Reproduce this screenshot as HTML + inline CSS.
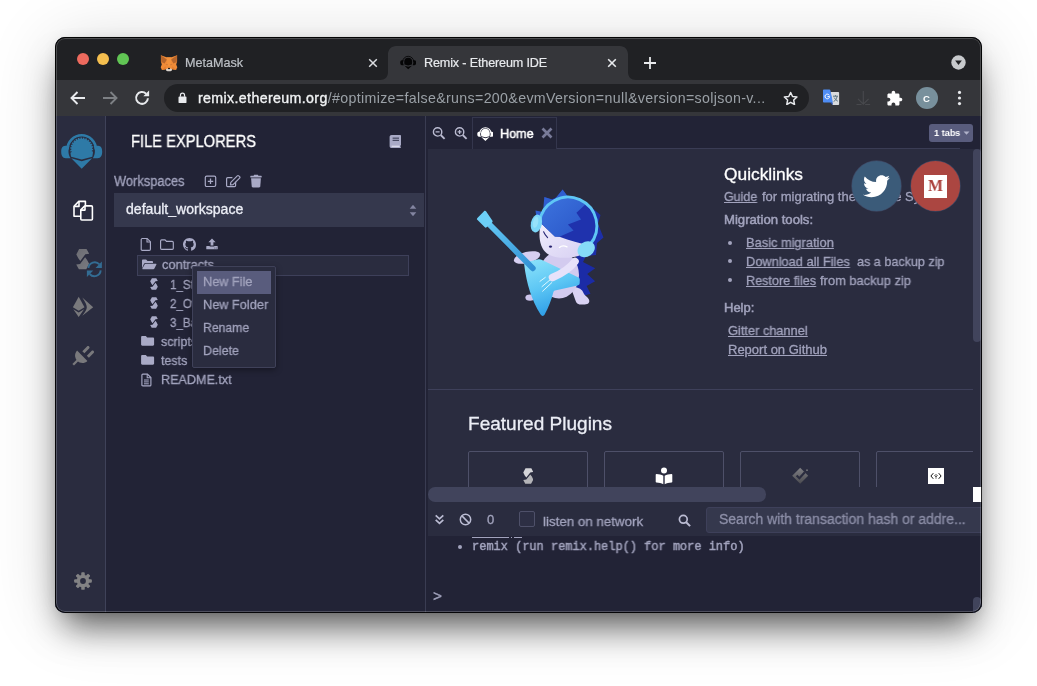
<!DOCTYPE html>
<html lang="en">
<head>
<meta charset="utf-8">
<title>Remix - Ethereum IDE</title>
<style>
*{box-sizing:border-box;margin:0;padding:0}
html,body{width:1037px;height:686px;overflow:hidden;background:#fff}
body{font-family:"Liberation Sans",sans-serif;color:#a2a3bd;position:relative}
.abs{position:absolute}
#win{position:absolute;left:55px;top:37px;width:927px;height:576px;border-radius:10px;background:#222336;overflow:hidden;z-index:2}
#shadow{position:absolute;left:56px;top:38px;width:925px;height:574px;border-radius:10px;
 box-shadow:0 22px 34px -8px rgba(0,0,0,.6),0 6px 70px rgba(0,0,0,.16),0 1px 14px rgba(0,0,0,.08),0 0 2px rgba(0,0,0,.4);z-index:1}
#ring{position:absolute;left:0;top:0;width:927px;height:576px;border-radius:10px;box-shadow:inset 0 0 0 1px rgba(0,0,0,.85);z-index:50;pointer-events:none}
#ring2{position:absolute;left:1px;top:1px;width:925px;height:574px;border-radius:9px;box-shadow:inset 0 0 0 1px rgba(255,255,255,.2);z-index:49;pointer-events:none}
/* chrome */
#tabstrip{position:absolute;left:0;top:0;width:927px;height:43px;background:#202124}
#toolbar{position:absolute;left:0;top:43px;width:927px;height:36px;background:#35363a}
.tl{position:absolute;top:16px;width:12px;height:12px;border-radius:50%}
.ctext{font-family:"Liberation Sans",sans-serif;font-size:12.5px;white-space:nowrap}
/* remix */
#app{position:absolute;left:0;top:79px;width:927px;height:497px;background:#222336}
#iconpanel{position:absolute;left:0;top:0;width:51px;height:497px;background:#2a2c3f;border-right:1px solid #3f4259}
#side{position:absolute;left:52px;top:0;width:318px;height:497px;background:#222336}
#main{position:absolute;left:371px;top:0;width:556px;height:497px;background:#222336}
#split{position:absolute;left:370px;top:0;width:1px;height:497px;background:#3a3c52}
.t{position:absolute;white-space:nowrap;line-height:1;will-change:transform}
#app .t{-webkit-text-stroke:.3px currentColor}
#app .t.ns{-webkit-text-stroke:0}
</style>
</head>
<body>
<div id="shadow"></div>
<div id="win">
  <div id="ring"></div><div id="ring2"></div>
  <div id="tabstrip">
    <div class="tl" style="left:22px;background:#ed6a5e"></div>
    <div class="tl" style="left:42px;background:#f5bf4f"></div>
    <div class="tl" style="left:62px;background:#61c554"></div>

    <!-- inactive tab -->
    <svg class="abs" style="left:105px;top:17px" width="18" height="18" viewBox="160 54 18 18">
      <path d="M160.900 55.300L166.500 57.300L171.500 57.300L177.100 55.300L177.100 61.500L176.200 64.400L177.300 67.200L176.100 70.100L172.200 69.300L170.500 70.600L167.500 70.600L165.800 69.300L161.900 70.100L160.700 67.200L161.800 64.400L160.900 61.500Z" fill="#f08b37"/>
      <path d="M160.900 55.300L166.900 59.600L164.600 63.600L161.300 62Z" fill="#b5652c"/>
      <path d="M177.100 55.300L171.100 59.600L173.400 63.600L176.700 62Z" fill="#b5652c"/>
      <path d="M166.500 57.300L171.500 57.300L170.300 66L167.700 66Z" fill="#f39840" opacity=".6"/>
      <path d="M165.500 64L167.700 64.300L167.300 65.600Z" fill="#c9773a"/><path d="M172.500 64L170.300 64.300L170.700 65.600Z" fill="#c9773a"/>
      <path d="M161.900 70.100L165.600 66.300L165.800 69.300Z" fill="#e27d2e"/><path d="M176.100 70.100L172.400 66.300L172.200 69.300Z" fill="#e27d2e"/>
      <ellipse cx="169" cy="69.700" rx="3" ry="1.500" fill="#d9d3cd"/>
      <ellipse cx="169" cy="68.500" rx="1" ry=".700" fill="#111"/>
    </svg>
    <div class="t ctext" style="left:130px;top:20px;color:#bdc1c6;font-size:12.6px;-webkit-text-stroke:.2px #bdc1c6" id="tMeta">MetaMask</div>
    <svg class="abs" style="left:313px;top:21px" width="10" height="10" viewBox="0 0 10 10"><path d="M1.2 1.2L8.8 8.8M8.8 1.2L1.2 8.8" stroke="#dadce0" stroke-width="1.5" fill="none"/></svg>
    <!-- active tab -->
    <svg class="abs" style="left:325px;top:9px" width="256" height="34" viewBox="0 0 256 34">
      <path d="M0 34 C5 34 8 31 8 26 L8 8 C8 3.6 11.6 0 16 0 L240 0 C244.4 0 248 3.6 248 8 L248 26 C248 31 251 34 256 34 Z" fill="#35363a"/>
    </svg>
    <svg class="abs" style="left:344.800px;top:18px" width="16.400" height="14.500" viewBox="60.700 132 42 37.100">
      <g fill="#050506"><path d="M67.500 149.500A14.200 14.200 0 0 1 95.900 149.500" fill="none" stroke="#050506" stroke-width="2.200"/>
      <path d="M69.900 145.700L65.300 145.700C62.300 145.900 61.200 148.300 61.200 151.500C61.200 155.400 62.400 158.200 65.800 158.200L70.600 158.200C68.300 155 67.600 149.500 69.900 145.700Z"/>
      <path d="M93.500 145.700L98.100 145.700C101.100 145.900 102.200 148.300 102.200 151.500C102.200 155.400 101 158.200 97.600 158.200L92.800 158.200C95.100 155 95.800 149.500 93.500 145.700Z"/>
      <path d="M71.600 149A10.100 10.100 0 0 1 91.800 149C91.800 152 91.600 154.300 91.100 156.200L81.700 158.700L72.300 156.200C71.800 154.300 71.600 152 71.600 149Z"/>
      <path d="M72.300 159.300L81.700 162.200L91.100 159.300L81.700 168.700Z"/></g>
    </svg>
    <div class="t ctext" style="left:369px;top:20px;color:#e8eaed;font-size:12.6px;letter-spacing:-.15px;-webkit-text-stroke:.2px #e8eaed" id="tRemix">Remix - Ethereum IDE</div>
    <svg class="abs" style="left:552px;top:21px" width="10" height="10" viewBox="0 0 10 10"><path d="M1.200 1.200L8.800 8.800M8.800 1.200L1.200 8.800" stroke="#e8eaed" stroke-width="1.600" fill="none"/></svg>
    <svg class="abs" style="left:588px;top:19px" width="14" height="14" viewBox="0 0 14 14"><path d="M7 1V13M1 7H13" stroke="#e8eaed" stroke-width="1.800" fill="none"/></svg>
    <svg class="abs" style="left:896px;top:18px" width="15" height="15" viewBox="0 0 15 15"><circle cx="7.500" cy="7.500" r="7.200" fill="#c8cacd"/><path d="M4.100 5.600h6.800L7.500 10z" fill="#202124"/></svg>
  </div>
  <div id="toolbar">
    <svg class="abs" style="left:14px;top:10px" width="18" height="16" viewBox="0 0 18 16"><path d="M16 8H3M8.500 2L2.500 8l6 6" stroke="#e8eaed" stroke-width="1.900" fill="none"/></svg>
    <svg class="abs" style="left:46px;top:10px" width="18" height="16" viewBox="0 0 18 16"><path d="M2 8h13M9.500 2l6 6-6 6" stroke="#7d8084" stroke-width="1.900" fill="none"/></svg>
    <svg class="abs" style="left:78px;top:9px" width="18" height="18" viewBox="0 0 18 18"><path d="M14.900 9.200A5.900 5.900 0 1 1 13.100 4.700" stroke="#e8eaed" stroke-width="2" fill="none"/><path d="M10.300 7.300h5.800V1.500z" fill="#e8eaed"/></svg>
    <div class="abs" style="left:109px;top:4px;width:645px;height:28px;border-radius:14px;background:#202124"></div>
    <svg class="abs" style="left:122.600px;top:11.800px" width="9" height="11.500" viewBox="0 0 10 13"><rect x="0.500" y="5.200" width="9" height="7.300" rx="1" fill="#e8eaed"/><path d="M2.700 5.500V3.700a2.300 2.300 0 0 1 4.600 0V5.500" stroke="#e8eaed" stroke-width="1.400" fill="none"/></svg>
    <div class="t" style="left:143px;top:10.500px;font-size:14.200px;color:#e8eaed;letter-spacing:0" id="tUrl"><span id="tDom" style="letter-spacing:.37px;color:#f1f3f4;-webkit-text-stroke:.35px #f1f3f4">remix.ethereum.org</span><span style="color:#9aa0a6;letter-spacing:.35px" id="tPath">/#optimize=false&amp;runs=200&amp;evmVersion=null&amp;version=soljson-v...</span></div>
    <svg class="abs" style="left:728px;top:10.500px" width="15.300" height="14.400" viewBox="0 0 17 16"><path d="M8.500 1.600l2.100 4.500 4.900.6-3.600 3.400.9 4.900-4.300-2.400-4.300 2.400.9-4.900L1.500 6.700l4.900-.6z" stroke="#e8eaed" stroke-width="1.650" fill="none" stroke-linejoin="round"/></svg>
    <svg class="abs" style="left:767px;top:9px" width="18" height="18" viewBox="822 90 18 18"><path d="M830.500 93H838.300C838.800 93 839.100 93.300 839.100 93.800V105.200C839.100 105.700 838.800 106 838.300 106H832.500Z" fill="#d9dbdd"/><path d="M833 97.200h5M835.500 96.200v1M833.600 102.600c1.700-.9 3-2.600 3.500-5.200M834.200 98.600c.8 1.500 2 2.800 3.600 3.600" stroke="#4f6a78" stroke-width=".9" fill="none"/><path d="M830.300 103.500L832.600 106L832.600 103.500Z" fill="#2a56c6"/><path d="M823.800 90.400H829.400C829.900 90.400 830.200 90.600 830.300 91.100L832.900 103.500H823.800C823.300 103.500 823 103.200 823 102.700V91.200C823 90.700 823.300 90.400 823.800 90.400Z" fill="#4f8df5"/><path d="M829.300 96.300A2.300 2.300 0 1 0 829.600 97.600H827.500" stroke="#fff" stroke-width="1" fill="none"/></svg>
    <svg class="abs" style="left:800px;top:10px" width="16" height="16" viewBox="855 90 16 16"><path d="M863.300 91V104M858 98.800L863.300 104.200L868.600 98.800M856.500 104.500H861.500M865.100 104.500H870.100" stroke="#48494d" stroke-width="1.150" fill="none"/></svg>
    <svg class="abs" style="left:831px;top:10px" width="17" height="17" viewBox="0 0 24 24"><path d="M20.500 11H19V7c0-1.100-.9-2-2-2h-4V3.500C13 2.120 11.880 1 10.500 1S8 2.120 8 3.500V5H4c-1.100 0-1.990.9-1.990 2v3.800H3.500c1.490 0 2.700 1.210 2.700 2.700s-1.210 2.700-2.700 2.700H2V20c0 1.100.9 2 2 2h3.800v-1.500c0-1.490 1.210-2.700 2.700-2.700 1.490 0 2.700 1.210 2.700 2.700V22H17c1.100 0 2-.9 2-2v-4h1.500c1.380 0 2.500-1.120 2.500-2.500S21.880 11 20.500 11z" fill="#fff"/></svg>
    <div class="abs" style="left:861px;top:7px;width:22px;height:22px;border-radius:50%;background:#78909c"></div>
    <div class="t" style="left:868px;top:13.500px;font-size:9.500px;color:#fff;font-weight:bold">C</div>
    <svg class="abs" style="left:902px;top:9px" width="5" height="18" viewBox="0 0 5 18"><circle cx="2.500" cy="3.400" r="1.600" fill="#e8eaed"/><circle cx="2.500" cy="9" r="1.600" fill="#e8eaed"/><circle cx="2.500" cy="14.600" r="1.600" fill="#e8eaed"/></svg>
  </div>
  <div id="app">
    <div id="iconpanel">
      <svg class="abs" style="left:0;top:0" width="51" height="496" viewBox="55 116 51 496">
        <!-- remix logo -->
        <g fill="#2e7aa7">
          <path d="M67.500 149.500A14.200 14.200 0 0 1 95.900 149.500" fill="none" stroke="#2e7aa7" stroke-width="2.600"/>
          <path d="M69.900 145.700L65.300 145.700C62.300 145.900 61.200 148.300 61.200 151.500C61.200 155.400 62.400 158.200 65.800 158.200L70.600 158.200C68.300 155 67.600 149.500 69.900 145.700Z"/>
          <path d="M93.500 145.700L98.100 145.700C101.100 145.900 102.200 148.300 102.200 151.500C102.200 155.400 101 158.200 97.600 158.200L92.800 158.200C95.100 155 95.800 149.500 93.500 145.700Z"/>
          <path d="M70.300 149A11.400 11.400 0 0 1 93.100 149C93.100 152 92.800 154.800 92.300 156.700L81.700 159.500L71.100 156.700C70.600 154.800 70.300 152 70.300 149Z"/>
          <path d="M71.300 158.300L81.700 161.200L92.100 158.300L81.700 168.700Z"/>
        </g>
        <path d="M70.900 152.400A11.300 11.300 0 1 1 92.500 152.400" fill="none" stroke="#2a2c3f" stroke-width="1.900" stroke-dasharray="1.050 1.600" />
        <!-- files -->
        <g fill="none" stroke="#fff" stroke-width="1.600" stroke-linejoin="round">
          <path d="M80.200 216.200H74V206.200L78.800 201.400H85.400V205.200"/>
          <path d="M74.200 206.400H79V201.600"/>
          <path d="M84.800 205.900H91.400Q92.400 205.900 92.400 206.900V219Q92.400 220 91.400 220H81.800Q80.800 220 80.800 219V209.900Z"/><path d="M80.900 210.100H85V206"/>
        </g>
        <!-- solidity -->
        <defs><linearGradient id="sg" x1="0" y1="0" x2="1" y2="1"><stop offset="0" stop-color="#7d7d80"/><stop offset="1" stop-color="#929294"/></linearGradient></defs>
        <path d="M76.300 254.400L79.100 249L86.500 249L89.200 253.700L85.300 254.300L80.300 261L78.300 258.200Z" fill="url(#sg)" opacity=".78"/>
        <path d="M89.100 263.800L86.300 269.200L78.900 269.200L76.200 264.500L80.100 263.900L85.100 257.200L87.100 260Z" fill="url(#sg)" opacity=".78"/>
        <!-- sync -->
        <g fill="none" stroke="#336c93" stroke-width="1.900">
          <path d="M88.400 268A6.300 6.300 0 0 1 99.400 264.400"/>
          <path d="M100.700 270.400A6.300 6.300 0 0 1 89.700 274"/>
        </g>
        <path d="M101.900 261.500V267.900H95.500z" fill="#336c93"/>
        <path d="M86.900 276.900V270.500H93.300z" fill="#336c93"/>
        <!-- deploy (ethereum) -->
        <g fill="#79797c">
          <path d="M78.700 296.700L72.900 307.200L78.700 310.700L84.500 307.200Z"/>
          <path d="M73.300 309.200L78.700 317L84.100 309.200L78.700 312.600Z"/>
          <path d="M82.300 297.400L93.200 307.200L82.300 315.800C85.400 311.600 86.800 309.600 86.800 307.200C86.800 304.800 85.400 302 82.300 297.400Z"/>
        </g>
        <!-- plug -->
        <g fill="#79797c" stroke="none">
          <path d="M72.400 363.900L77.600 358.700L79.200 360.300L74 365.500Z"/>
          <path d="M77.100 350.600L87.400 360.900C84.400 363.700 80 363.500 77.200 360.700C74.400 357.900 74.400 353.500 77.100 350.600Z"/>
          <path d="M82.300 351.200L87 346.500C87.600 345.900 88.500 345.900 89.100 346.500C89.700 347.100 89.700 348 89.100 348.600L84.400 353.300Z"/>
          <path d="M86.800 355.700L91.500 351C92.100 350.400 93 350.400 93.600 351C94.200 351.600 94.200 352.500 93.600 353.100L88.900 357.800Z"/>
        </g>
        <!-- settings gear -->
        <g transform="translate(83 581)">
          <g fill="#828284">
            <rect x="-1.750" y="-8.850" width="3.500" height="17.700" rx=".9"/>
            <rect x="-1.750" y="-8.850" width="3.500" height="17.700" rx=".9" transform="rotate(45)"/>
            <rect x="-1.750" y="-8.850" width="3.500" height="17.700" rx=".9" transform="rotate(90)"/>
            <rect x="-1.750" y="-8.850" width="3.500" height="17.700" rx=".9" transform="rotate(135)"/>
            <circle r="6.300"/>
          </g>
          <circle r="2.900" fill="#2a2c3f"/>
        </g>
      </svg>
    </div>
    <div id="side"><div class="abs" style="left:-107px;top:-116px;width:0;height:0">
      <div class="t" style='left:131px;top:133.00px;font-size:16.5px;color:#ffffff;transform:scaleX(0.8909);transform-origin:0 0'>FILE EXPLORERS</div>
      <!-- book icon -->
      <svg class="abs" style="left:389px;top:134px" width="13" height="15" viewBox="0 0 13 15">
        <path d="M2.600 1H11.200C11.700 1 12 1.300 12 1.800V10.800C12 11.200 11.800 11.400 11.500 11.500V13C11.800 13.100 12 13.300 12 13.600C12 13.900 11.800 14.100 11.400 14.100H2.800C1.500 14.100 0.600 13.200 0.600 11.900V3C0.600 1.800 1.400 1 2.600 1Z" fill="#a9aac6"/>
        <rect x="3.600" y="3.600" width="6.400" height="1.100" fill="#3b3d55"/><rect x="3.600" y="5.800" width="6.400" height="1.100" fill="#3b3d55"/>
        <rect x="2.600" y="11.700" width="8" height="1.100" fill="#e4e5f0"/>
      </svg>
      <div class="t" style='left:114px;top:174.00px;font-size:14px;color:#a2a3bd;transform:scaleX(0.9182);transform-origin:0 0'>Workspaces</div>
      <!-- plus-square -->
      <svg class="abs" style="left:204px;top:175px" width="13" height="13" viewBox="0 0 13 13"><rect x="1.300" y="1.100" width="10.400" height="10.400" rx="1.400" fill="none" stroke="#a9aac6" stroke-width="1.200"/><path d="M6.500 3.600V9M3.800 6.300H9.200" stroke="#a9aac6" stroke-width="1.300" fill="none"/></svg>
      <!-- edit -->
      <svg class="abs" style="left:225px;top:174px" width="16" height="14" viewBox="0 0 16 14"><path d="M10.600 7.800V11.600C10.600 12.300 10.200 12.700 9.500 12.700H2.700C2 12.700 1.600 12.300 1.600 11.600V4.800C1.600 4.100 2 3.700 2.700 3.700H7.400" fill="none" stroke="#a9aac6" stroke-width="1.200"/><path d="M5.800 8.300L12.300 1.800C12.700 1.400 13.300 1.400 13.700 1.800L14.600 2.700C15 3.100 15 3.700 14.600 4.100L8.100 10.600L5.400 11Z" fill="none" stroke="#a9aac6" stroke-width="1.200" stroke-linejoin="round"/></svg>
      <!-- trash -->
      <svg class="abs" style="left:250px;top:174px" width="12" height="14" viewBox="0 0 12 14"><path d="M0.300 2.300C0.300 2 0.500 1.800 0.800 1.800H3.600L4 1.100C4.100 0.900 4.300 0.800 4.500 0.800H7.500C7.700 0.800 7.900 0.900 8 1.100L8.400 1.800H11.200C11.500 1.800 11.700 2 11.700 2.300V3.100C11.700 3.300 11.600 3.400 11.400 3.400H0.600C0.400 3.400 0.300 3.300 0.300 3.100Z" fill="#a9aac6"/><path d="M1.100 4.300H10.900L10.300 12.300C10.250 12.900 9.800 13.400 9.100 13.400H2.900C2.200 13.400 1.750 12.900 1.700 12.300Z" fill="#a9aac6"/></svg>
      <!-- select -->
      <div class="abs" style="left:114px;top:193px;width:310px;height:34px;background:#35384d"></div>
      <div class="t" style='left:126.2px;top:202.00px;font-size:14px;color:#eceef6;transform:scaleX(1.0047);transform-origin:0 0'>default_workspace</div>
      <svg class="abs" style="left:409px;top:204px" width="8" height="13" viewBox="0 0 8 13"><path d="M0.700 4.700L4 0.700L7.300 4.700Z" fill="#8385a1"/><path d="M0.700 8.300L4 12.300L7.300 8.300Z" fill="#8385a1"/></svg>
      <!-- file action icons -->
      <svg class="abs" style="left:140px;top:237px" width="12" height="15" viewBox="0 0 12 15"><path d="M2.300 1.500H7.200L10.400 4.700V12.300C10.400 13 10 13.400 9.300 13.400H2.300C1.600 13.400 1.200 13 1.200 12.300V2.600C1.200 1.900 1.600 1.500 2.300 1.500Z" fill="none" stroke="#a9aac6" stroke-width="1.150"/><path d="M7 1.700V5H10.200" fill="none" stroke="#a9aac6" stroke-width="1.100"/></svg>
      <svg class="abs" style="left:159px;top:238px" width="16" height="13" viewBox="0 0 16 13"><path d="M2.700 1.800H6L7.500 3.300H13.200C13.900 3.300 14.300 3.700 14.300 4.400V10.200C14.300 10.900 13.900 11.300 13.200 11.300H2.700C2 11.300 1.600 10.900 1.600 10.200V2.900C1.600 2.200 2 1.800 2.700 1.800Z" fill="none" stroke="#a9aac6" stroke-width="1.150"/></svg>
      <svg class="abs" style="left:183px;top:237.600px" width="13" height="13" viewBox="0 0 16 16"><path d="M8 0C3.580 0 0 3.580 0 8c0 3.540 2.290 6.530 5.470 7.590.4.070.55-.17.550-.38 0-.19-.01-.82-.01-1.490-2.010.37-2.530-.49-2.690-.94-.09-.23-.48-.94-.82-1.130-.28-.15-.68-.52-.01-.53.630-.01 1.080.58 1.230.82.720 1.210 1.870.87 2.330.66.070-.52.280-.87.510-1.070-1.780-.2-3.640-.89-3.640-3.950 0-.87.310-1.590.82-2.150-.08-.2-.36-1.020.08-2.120 0 0 .67-.21 2.200.82.640-.18 1.320-.27 2-.27s1.360.09 2 .27c1.530-1.040 2.200-.82 2.200-.82.440 1.100.16 1.920.08 2.120.51.560.82 1.270.82 2.150 0 3.070-1.870 3.750-3.650 3.950.29.250.54.730.54 1.480 0 1.070-.01 1.930-.01 2.200 0 .21.150.46.550.38A8.013 8.013 0 0016 8c0-4.420-3.580-8-8-8z" fill="#a9aac6"/></svg>
      <svg class="abs" style="left:205.500px;top:238.400px" width="12" height="12" viewBox="0 0 13 13"><path d="M6.500 0.600L10.400 4.700H8V8.200H5V4.700H2.600Z" fill="#a9aac6"/><path d="M0.800 8.800H4V9.300H9V8.800H12.200C12.500 8.800 12.700 9 12.700 9.300V11.800C12.700 12.100 12.500 12.300 12.200 12.300H0.800C0.500 12.300 0.300 12.100 0.300 11.800V9.300C0.300 9 0.500 8.800 0.800 8.800Z" fill="#a9aac6"/><circle cx="9.600" cy="10.900" r=".5" fill="#222336"/><circle cx="11.100" cy="10.900" r=".5" fill="#222336"/></svg>
      <!-- tree -->
      <div class="abs" style="left:137px;top:255px;width:272px;height:21px;background:#2a2c3f;border:1px solid #3e405a"></div>
      <svg class="abs" style="left:141px;top:259px" width="16" height="11" viewBox="0 0 16 11"><path d="M1 9.200V1.700C1 1 1.400 0.600 2.100 0.600H5.100L6.500 2H10.900C11.600 2 12 2.400 12 3.100V3.900H4.500C3.800 3.900 3.300 4.200 3 4.800Z" fill="#a9aac6"/><path d="M4.600 4.800H15C15.400 4.800 15.600 5.100 15.400 5.500L13.400 9.600C13.200 10 12.800 10.200 12.400 10.200H1.700C1.300 10.200 1.200 10 1.400 9.600L3.600 5.400C3.800 5 4.200 4.800 4.600 4.800Z" fill="#a9aac6"/></svg>
      <div class="t" style='left:162.2px;top:258.00px;font-size:13px;color:#a2a3bd;transform:scaleX(0.9858);transform-origin:0 0'>contracts</div>
      <svg class="abs" style="left:150.300px;top:278.400px" width="8" height="12" viewBox="0 0 8 12"><path d="M0.200 3.300L1.900 0.200L6.300 0.200L7.800 3L5.500 3.300L2.500 7.200L1.300 5.600Z" fill="#a9aac6"/><path d="M7.800 8.700L6.100 11.800L1.700 11.800L0.200 9L2.500 8.700L5.500 4.800L6.700 6.400Z" fill="#a9aac6"/></svg>
      <div class="t" style='left:169.8px;top:278.00px;font-size:13px;color:#a2a3bd;transform:scaleX(0.8900);transform-origin:0 0'>1_Storage.sol</div>
      <svg class="abs" style="left:150.300px;top:297.300px" width="8" height="12" viewBox="0 0 8 12"><path d="M0.200 3.300L1.900 0.200L6.300 0.200L7.800 3L5.500 3.300L2.500 7.200L1.300 5.600Z" fill="#a9aac6"/><path d="M7.800 8.700L6.100 11.800L1.700 11.800L0.200 9L2.500 8.700L5.500 4.800L6.700 6.400Z" fill="#a9aac6"/></svg>
      <div class="t" style='left:169.8px;top:297.00px;font-size:13px;color:#a2a3bd;transform:scaleX(0.8900);transform-origin:0 0'>2_Owner.sol</div>
      <svg class="abs" style="left:150.300px;top:316.200px" width="8" height="12" viewBox="0 0 8 12"><path d="M0.200 3.300L1.900 0.200L6.300 0.200L7.800 3L5.500 3.300L2.500 7.200L1.300 5.600Z" fill="#a9aac6"/><path d="M7.800 8.700L6.100 11.800L1.700 11.800L0.200 9L2.500 8.700L5.500 4.800L6.700 6.400Z" fill="#a9aac6"/></svg>
      <div class="t" style='left:169.8px;top:316.00px;font-size:13px;color:#a2a3bd;transform:scaleX(0.8900);transform-origin:0 0'>3_Ballot.sol</div>
      <svg class="abs" style="left:141px;top:336.400px" width="14" height="10" viewBox="0 0 14 10"><path d="M1.300 0H4.800L6.200 1.400H11.900C12.600 1.400 13.100 1.900 13.100 2.600V8.500C13.100 9.200 12.600 9.700 11.900 9.700H1.300C0.600 9.700 0.100 9.200 0.100 8.500V1.200C0.100 0.500 0.600 0 1.300 0Z" fill="#a9aac6"/></svg>
      <div class="t" style='left:161.4px;top:335.00px;font-size:13px;color:#a2a3bd;transform:scaleX(0.9600);transform-origin:0 0'>scripts</div>
      <svg class="abs" style="left:141px;top:355.300px" width="14" height="10" viewBox="0 0 14 10"><path d="M1.300 0H4.800L6.200 1.400H11.900C12.600 1.400 13.100 1.900 13.100 2.600V8.500C13.100 9.200 12.600 9.700 11.900 9.700H1.300C0.600 9.700 0.100 9.200 0.100 8.500V1.200C0.100 0.500 0.600 0 1.300 0Z" fill="#a9aac6"/></svg>
      <div class="t" style='left:161.4px;top:354.00px;font-size:13px;color:#a2a3bd;transform:scaleX(0.9600);transform-origin:0 0'>tests</div>
      <svg class="abs" style="left:140.500px;top:372.500px" width="11" height="14" viewBox="0 0 11 14"><path d="M1.900 1.100H6.400L9.900 4.600V11.900C9.900 12.500 9.500 12.900 8.900 12.900H1.900C1.300 12.900 0.900 12.500 0.900 11.900V2.100C0.900 1.500 1.300 1.100 1.900 1.100Z" fill="none" stroke="#a9aac6" stroke-width="1.150"/><path d="M6.200 1.300V4.800H9.700" fill="none" stroke="#a9aac6" stroke-width="1.050"/><path d="M3 7H7.800M3 8.900H7.800M3 10.800H7.800" stroke="#a9aac6" stroke-width="1" fill="none"/></svg>
      <div class="t" style='left:161.4px;top:373.00px;font-size:13px;color:#a2a3bd;transform:scaleX(0.9689);transform-origin:0 0'>README.txt</div>
      <!-- context menu -->
      <div class="abs" style="left:192px;top:266px;width:84px;height:102px;background:#2a2c3f;border:1px solid #3f4159;border-radius:2px;box-shadow:0 2px 6px rgba(0,0,0,.35)"></div>
      <div class="abs" style="left:197px;top:271px;width:74px;height:23px;background:#595c7d"></div>
      <div class="t" style='left:203px;top:275.00px;font-size:13px;color:#a2a3bd;transform:scaleX(0.9787);transform-origin:0 0'>New File</div>
      <div class="t" style='left:203px;top:298.00px;font-size:13px;color:#a2a3bd;transform:scaleX(0.9794);transform-origin:0 0'>New Folder</div>
      <div class="t" style='left:203px;top:321.00px;font-size:13px;color:#a2a3bd;transform:scaleX(0.9402);transform-origin:0 0'>Rename</div>
      <div class="t" style='left:203px;top:344.00px;font-size:13px;color:#a2a3bd;transform:scaleX(0.9580);transform-origin:0 0'>Delete</div>
    </div></div>
    <div id="split"></div>
    <div id="main"><div class="abs" style="left:-426px;top:-116px;width:0;height:0">
      <!-- tab bar -->
      <div class="abs" style="left:472px;top:148px;width:488px;height:1px;background:#3a3c54"></div>
      <svg class="abs" style="left:432px;top:126px" width="14" height="14" viewBox="0 0 14 14"><circle cx="5.600" cy="5.900" r="4.200" fill="none" stroke="#b9bad0" stroke-width="1.400"/><path d="M8.700 9L12.600 12.900" stroke="#b9bad0" stroke-width="1.800"/><path d="M3.600 5.900H7.600" stroke="#b9bad0" stroke-width="1.300"/></svg>
      <svg class="abs" style="left:454px;top:126px" width="14" height="14" viewBox="0 0 14 14"><circle cx="5.600" cy="5.900" r="4.200" fill="none" stroke="#b9bad0" stroke-width="1.400"/><path d="M8.700 9L12.600 12.900" stroke="#b9bad0" stroke-width="1.800"/><path d="M3.600 5.900H7.600M5.600 3.900V7.900" stroke="#b9bad0" stroke-width="1.300"/></svg>
      <div class="abs" style="left:472px;top:117px;width:85px;height:32px;background:#222336;border:1px solid #34364d;border-bottom:0"></div>
      <svg class="abs" style="left:476.700px;top:125.600px" width="16.800" height="15.600" viewBox="60.500 132 42.400 37.400">
        <g fill="#fff"><path d="M67.500 149.500A14.200 14.200 0 0 1 95.900 149.500" fill="none" stroke="#fff" stroke-width="2.800"/>
        <path d="M69.900 145.700L65.300 145.700C62.300 145.900 61.200 148.300 61.200 151.500C61.200 155.400 62.400 158.200 65.800 158.200L70.600 158.200C68.300 155 67.600 149.500 69.900 145.700Z"/>
        <path d="M93.500 145.700L98.100 145.700C101.100 145.900 102.200 148.300 102.200 151.500C102.200 155.400 101 158.200 97.600 158.200L92.800 158.200C95.100 155 95.800 149.500 93.500 145.700Z"/>
        <path d="M70.600 149A11.100 11.100 0 0 1 92.800 149C92.800 152 92.600 154.800 92.100 156.700L81.700 159.500L71.300 156.700C70.800 154.800 70.600 152 70.600 149Z"/>
        <path d="M71.300 158.800L81.700 161.700L92.100 158.800L81.700 168.700Z"/></g>
      </svg>
      <div class="t" style='left:499.6px;top:127.00px;font-size:13px;color:#ffffff;-webkit-text-stroke:.5px currentColor;transform:scaleX(0.9686);transform-origin:0 0'>Home</div>
      <svg class="abs" style="left:541px;top:127px" width="12" height="12" viewBox="0 0 12 12"><path d="M1.500 1.500L10.500 10.500M10.500 1.500L1.500 10.500" stroke="#787a98" stroke-width="2.700" fill="none"/></svg>
      <div class="abs" style="left:929px;top:124px;width:44px;height:18px;background:#595c7d;border-radius:3px"></div>
      <div class="t" style='left:933.7px;top:128.00px;font-size:9.8px;color:#ffffff;font-weight:700;-webkit-text-stroke:0;transform:scaleX(0.9319);transform-origin:0 0'>1 tabs</div>
      <svg class="abs" style="left:962.600px;top:130.600px" width="7" height="4.400" viewBox="0 0 8 5"><path d="M0.600 0.600H7.400L4 4.400Z" fill="#b0b1c9"/></svg>

      <!-- home content (scroll area) -->
      <div class="abs" style="left:428px;top:149px;width:545px;height:338px;background:#2a2c3f;overflow:hidden"><div class="abs" style="left:-428px;top:-149px;width:0;height:0">
        <svg class="abs" style="left:470px;top:185px" width="150" height="140" viewBox="470 185 150 140">
  <defs>
    <linearGradient id="gb" x1="0" y1="0" x2="0.350" y2="1"><stop offset="0" stop-color="#8fe4fb"/><stop offset=".55" stop-color="#5cc6f4"/><stop offset="1" stop-color="#2e9ee8"/></linearGradient>
    <linearGradient id="gn" x1="0" y1="0" x2="1" y2="1"><stop offset="0" stop-color="#62c6f3"/><stop offset="1" stop-color="#3190d4"/></linearGradient>
    <linearGradient id="gh" x1="0" y1="0" x2="1" y2="1"><stop offset="0" stop-color="#3d74de"/><stop offset="1" stop-color="#2a56c8"/></linearGradient>
    <linearGradient id="gf" x1="0" y1="0" x2="1" y2="1"><stop offset="0" stop-color="#f0edfc"/><stop offset="1" stop-color="#d6cff2"/></linearGradient>
  </defs>
  <!-- head spikes -->
  <path d="M552 204L544.300 197L551 199.500L557 197L562.600 189.500L568 197.500L578 199L590 206L600.500 215L598 224L603.500 237.500L597 243L596 255L586 256L575 230Z" fill="#1d2fa9"/>
  <path d="M537 222L535.500 210.500L543 212L544.300 197L554 200L562.600 189.500L569 198L560 215Z" fill="#2f5ed0"/>
  <!-- back spikes -->
  <path d="M577 250L586 256L583 262L595.200 268.200L587.200 274.100L595.100 281.300L586.600 285.900L590.500 293.800L583 296L574 284Z" fill="#1b2ba6"/>
  <!-- feet & torso -->
  <ellipse cx="530" cy="297.600" rx="4.600" ry="3.200" fill="#cdc5ec"/>
  <path d="M571 288C576 286 582 288.500 583.500 293C585 296.500 589.500 297.500 589.300 301.300C589.100 304.500 586 304.600 582 304.600C578 304.600 576.500 303.500 575.500 300.500Z" fill="#d9d2f3"/>
  <ellipse cx="559" cy="275" rx="20" ry="23.500" fill="#d3cbef"/>
  <!-- left arm -->
  <ellipse cx="527" cy="257.500" rx="13.500" ry="5.600" transform="rotate(-14 527 257.500)" fill="#d6cff1"/>
  <!-- guitar body -->
  <path d="M524.300 265.500C524 263.800 524.600 262.600 526 262.200L538.500 259.300C539.600 259.100 540.500 259.300 541.500 259.800L578 277.300C579.300 277.900 579.800 278.700 579.800 280L579.700 283.300C579.600 284.500 578.800 285.100 577.600 285.400L555 290.500C554 290.800 553.600 291.400 553.300 292.400C551.500 299.500 548.500 307 544.800 314.300C543.800 316.500 541.800 316.600 540.600 314.600C531.500 300 526.500 283 524.300 265.500Z" fill="url(#gb)"/>
  <!-- head -->
  <path d="M541.500 222C538 232 538.500 247 547 253.500C555 259.300 573 259 581.500 254.500C590 250 592 240 590 232Z" fill="url(#gf)"/>
  <path d="M540.200 222.500C541 206 553 196.800 568.100 196.800C584 196.800 596.900 209.700 596.900 225.600C596.900 233 594 240 589.500 245.500C580 243.500 570 240.500 559.400 236.700L554.800 236.400Z" fill="#1f32ad"/>
  <path d="M540.200 222.500C541.500 212 546.200 205 554.100 200.800C559 198.200 564.600 197.200 571 197.300C577 197.500 582 200 585.600 204.300L576.400 212.800L581 219.400L567.900 224.600L573.500 230.500L559.400 236.700L554.800 236.400Z" fill="url(#gh)"/>
  <!-- headband -->
  <path d="M539.500 222A28.800 28.800 0 1 1 590 244.500" fill="none" stroke="#5fc6f5" stroke-width="2.900"/>
  <ellipse cx="536.400" cy="223.500" rx="5.500" ry="9" transform="rotate(12 536.400 223.500)" fill="#7cd7f8"/>
  <ellipse cx="535.600" cy="222.300" rx="2.600" ry="5.600" transform="rotate(12 535.600 222.300)" fill="#a3e7fb" opacity=".7"/>
  <ellipse cx="586.200" cy="249.300" rx="9.200" ry="7.400" transform="rotate(-35 586.200 249.300)" fill="#86dbf7"/>
  <!-- face details -->
  <path d="M543.600 231.800C544.500 234 546 236 547.600 237.700" fill="none" stroke="#2b2a78" stroke-width="1.100" stroke-linecap="round"/>
  <ellipse cx="550.500" cy="246.600" rx="1.500" ry="1.200" fill="#26236e"/>
  <path d="M559.400 247.400C561.500 245.600 564.500 245.500 567 246.900" fill="none" stroke="#ffffff" stroke-width="1.300" stroke-linecap="round"/>
  <!-- neck -->
  <path d="M489 224L532.800 268.300" stroke="url(#gn)" stroke-width="5.800" stroke-linecap="round" fill="none"/>
  <path d="M477.400 217.900L484 211.300C484.700 210.600 485.600 210.700 486.200 211.500L492.300 220.500C492.800 221.300 492.700 221.900 492.100 222.500L486.600 227.300C485.900 227.900 485.200 227.800 484.600 227.100L477.300 219.800C476.700 219.200 476.800 218.500 477.400 217.900Z" fill="#6ccff7"/>
  <!-- right arm -->
  <path d="M575 261.500C570 268 562 273.500 552.500 277.600" stroke="#e7e2fa" stroke-width="7.600" stroke-linecap="round" fill="none"/>
  <!-- strum lines -->
  <path d="M540 281.300L545.300 277.400M542 286.600L549.900 280M542.600 291.200L551.800 282.600" stroke="#eafcff" stroke-width=".9" fill="none" stroke-linecap="round"/>
</svg>

        <div class="t" style='left:724.3px;top:166.00px;font-size:17.3px;color:#ffffff;transform:scaleX(1.0032);transform-origin:0 0'>Quicklinks</div>
        <div class="t" style='left:724.3px;top:190.00px;font-size:13px;color:#a2a3bd;transform:scaleX(0.9567);transform-origin:0 0'><u>Guide</u></div>
        <div class="t" style='left:762.1px;top:190.00px;font-size:13px;color:#a2a3bd;transform:scaleX(1.0000);transform-origin:0 0'>for migrating the old File System</div>
        <div class="t" style='left:724.3px;top:213.00px;font-size:13px;color:#a2a3bd;-webkit-text-stroke:.5px currentColor;transform:scaleX(1.0107);transform-origin:0 0'>Migration tools:</div>
        <div class="abs" style="left:728px;top:240.500px;width:4px;height:4px;border-radius:50%;background:#a2a3bd"></div>
        <div class="t" style='left:745.9px;top:236.00px;font-size:13px;color:#a2a3bd;transform:scaleX(0.9868);transform-origin:0 0'><u>Basic migration</u></div>
        <div class="abs" style="left:728px;top:259.400px;width:4px;height:4px;border-radius:50%;background:#a2a3bd"></div>
        <div class="t" style='left:745.9px;top:255.00px;font-size:13px;color:#a2a3bd;transform:scaleX(0.9848);transform-origin:0 0'><u>Download all Files</u></div>
        <div class="t" style='left:857.4px;top:255.00px;font-size:13px;color:#a2a3bd;transform:scaleX(0.9685);transform-origin:0 0'>as a backup zip</div>
        <div class="abs" style="left:728px;top:278.300px;width:4px;height:4px;border-radius:50%;background:#a2a3bd"></div>
        <div class="t" style='left:745.9px;top:274.00px;font-size:13px;color:#a2a3bd;transform:scaleX(0.9702);transform-origin:0 0'><u>Restore files</u></div>
        <div class="t" style='left:820px;top:274.00px;font-size:13px;color:#a2a3bd;transform:scaleX(0.9917);transform-origin:0 0'>from backup zip</div>
        <div class="t" style='left:724.3px;top:301.00px;font-size:13px;color:#a2a3bd;-webkit-text-stroke:.5px currentColor;transform:scaleX(0.9948);transform-origin:0 0'>Help:</div>
        <div class="t" style='left:728.3px;top:324.00px;font-size:13px;color:#a2a3bd;transform:scaleX(0.9847);transform-origin:0 0'><u>Gitter channel</u></div>
        <div class="t" style='left:728.3px;top:343.00px;font-size:13px;color:#a2a3bd;transform:scaleX(0.9958);transform-origin:0 0'><u>Report on Github</u></div>
        <div class="abs" style="left:428px;top:389px;width:545px;height:1px;background:#3e405a"></div>
        <div class="t" style='left:468.4px;top:414.00px;font-size:19px;color:#eceef6;transform:scaleX(1.0024);transform-origin:0 0'>Featured Plugins</div>
        <div class="abs" style="left:468px;top:451px;width:120px;height:60px;border:1px solid #4e5069;border-radius:2px"></div>
        <div class="abs" style="left:604px;top:451px;width:120px;height:60px;border:1px solid #4e5069;border-radius:2px"></div>
        <div class="abs" style="left:740px;top:451px;width:120px;height:60px;border:1px solid #4e5069;border-radius:2px"></div>
        <div class="abs" style="left:876px;top:451px;width:120px;height:60px;border:1px solid #4e5069;border-radius:2px"></div>
        <!-- plugin icons -->
        <svg class="abs" style="left:522.700px;top:468px" width="10.600" height="16" viewBox="0 0 8 12" preserveAspectRatio="none"><path d="M0.200 3.300L1.900 0.200L6.300 0.200L7.800 3L5.500 3.300L2.500 7.200L1.300 5.600Z" fill="#d4d4d8"/><path d="M7.800 8.700L6.100 11.800L1.700 11.800L0.200 9L2.500 8.700L5.500 4.800L6.700 6.400Z" fill="#b4b4b8"/></svg>
        <svg class="abs" style="left:655px;top:467px" width="18" height="18" viewBox="0 0 18 18"><circle cx="9" cy="3.600" r="3" fill="#fff"/><path d="M8.300 8.700V17.300C6.500 16.100 3.900 15.500 1.400 15.400C1 15.400 0.700 15.100 0.700 14.700V7.700C0.700 7.300 1 7 1.400 7C3.900 7.100 6.500 7.600 8.300 8.700Z" fill="#fff"/><path d="M9.700 8.700V17.300C11.500 16.100 14.100 15.500 16.600 15.400C17 15.400 17.300 15.100 17.300 14.700V7.700C17.300 7.300 17 7 16.600 7C14.100 7.100 11.500 7.600 9.700 8.700Z" fill="#fff"/></svg>
        <svg class="abs" style="left:790px;top:466px" width="22" height="20" viewBox="0 0 22 20"><defs><linearGradient id="dg" x1="0" y1="0" x2="0" y2="1"><stop offset="0" stop-color="#808085"/><stop offset="1" stop-color="#4a4a4f"/></linearGradient></defs><path d="M10.200 1.800L18.200 9.800L10.200 17.800L2.200 9.800Z" fill="url(#dg)"/><path d="M6.600 9.600L9.400 12.300L14.800 6.200" stroke="#2a2c3f" stroke-width="2.100" fill="none"/><circle cx="17" cy="4.200" r=".9" fill="#77777b"/></svg>
        <div class="abs" style="left:928px;top:468px;width:16px;height:16px;background:#fff"></div>
        <svg class="abs" style="left:930px;top:471px" width="12" height="10" viewBox="0 0 12 10"><path d="M3.300 2.200L0.900 5L3.300 7.800M8.700 2.200L11.100 5L8.700 7.800" stroke="#111" stroke-width="1" fill="none"/><path d="M4.300 4.600A2.300 2.300 0 0 1 7.700 4.600M5 5.800A1.300 1.300 0 0 1 7 5.800" stroke="#333" stroke-width=".8" fill="none"/><circle cx="6" cy="6.900" r=".7" fill="#333"/></svg>
        <!-- floating social buttons -->
        <div class="abs" style="left:852px;top:161.400px;width:49.400px;height:49.400px;border-radius:50%;background:#3b5b79;box-shadow:0 0 0 .7px rgba(70,80,110,.7)"></div>
        <svg class="abs" style="left:863px;top:175px" width="27" height="23" viewBox="0 0 24 20"><path d="M21.500 5c0 .2 0 .4 0 .600 0 6.500-5 14-14 14-2.800 0-5.400-.8-7.500-2.200.4 0 .8.100 1.200.100 2.300 0 4.400-.8 6.100-2.100-2.200 0-4-1.500-4.600-3.400.3.100.600.100.900.100.4 0 .9-.1 1.300-.2-2.300-.5-4-2.400-4-4.800v-.1c.7.400 1.400.600 2.200.600-1.300-.9-2.200-2.400-2.200-4.100 0-.9.200-1.700.700-2.500 2.400 3 6.100 4.900 10.100 5.100-.1-.4-.1-.7-.1-1.100 0-2.700 2.200-4.900 4.900-4.900 1.400 0 2.700.600 3.600 1.500 1.100-.2 2.200-.6 3.100-1.200-.4 1.100-1.100 2.100-2.200 2.700 1-.1 1.900-.4 2.800-.8-.6 1-1.400 1.800-2.300 2.500z" fill="#fff"/></svg>
        <div class="abs" style="left:910.900px;top:161.400px;width:49.400px;height:49.400px;border-radius:50%;background:#ab4641;box-shadow:0 0 0 .7px rgba(70,80,110,.7)"></div>
        <div class="abs" style="left:924px;top:175px;width:23px;height:23px;background:#fff"></div>
        <div class="t" style='left:927.9px;top:178.00px;font-size:16.5px;color:#ab3f3a;font-weight:700;-webkit-text-stroke:0;font-family:"Liberation Serif",serif;transform:scaleX(0.9629);transform-origin:0 0'>M</div>
      </div></div>
      <!-- vertical scrollbar -->
      <div class="abs" style="left:973px;top:149px;width:9px;height:338px;background:#2a2c3f"></div>
      <div class="abs" style="left:973px;top:149px;width:8px;height:193px;background:#41445c;border-radius:4px 4px 4px 4px"></div>
      <!-- horizontal scrollbar -->
      <div class="abs" style="left:428px;top:487px;width:545px;height:15px;background:#2a2c3f"></div>
      <div class="abs" style="left:428px;top:487.200px;width:338px;height:14.400px;background:#41445c;border-radius:7.200px"></div>
      <div class="abs" style="left:973px;top:487px;width:9px;height:15px;background:#fff"></div>
      <!-- terminal bar -->
      <div class="abs" style="left:428px;top:502px;width:554px;height:34px;background:#2a2c3f"></div>
      <svg class="abs" style="left:434px;top:514px" width="11" height="11" viewBox="0 0 11 11"><path d="M1.700 1.300L5.500 4.800L9.300 1.300M1.700 5.900L5.500 9.400L9.300 5.900" stroke="#bbbcd3" stroke-width="1.700" fill="none"/></svg>
      <svg class="abs" style="left:459px;top:513px" width="13" height="13" viewBox="0 0 13 13"><circle cx="6.500" cy="6.500" r="5.200" fill="none" stroke="#bbbcd3" stroke-width="1.500"/><path d="M2.900 2.900L10.100 10.100" stroke="#bbbcd3" stroke-width="1.500"/></svg>
      <div class="t" style='left:487.4px;top:513.00px;font-size:13px;color:#a2a3bd'>0</div>
      <div class="abs" style="left:519px;top:511px;width:16px;height:16px;border:1px solid #4e5069;border-radius:2px;background:#2d2f44"></div>
      <div class="t" style='left:542.6px;top:515.00px;font-size:13.5px;color:#a2a3bd;transform:scaleX(0.9890);transform-origin:0 0'>listen on network</div>
      <svg class="abs" style="left:678px;top:513.500px" width="13" height="13" viewBox="0 0 13 13"><circle cx="5.300" cy="5.300" r="3.900" fill="none" stroke="#bbbcd3" stroke-width="1.700"/><path d="M8.200 8.200L12.100 12.100" stroke="#bbbcd3" stroke-width="2"/></svg>
      <div class="abs" style="left:706px;top:507px;width:290px;height:25.500px;background:#35384d;border:1px solid #3e405a;border-radius:3px"></div>
      <div class="t" style='left:719px;top:512.00px;font-size:14px;color:#8d8fa8;transform:scaleX(0.9969);transform-origin:0 0'>Search with transaction hash or addre...</div>
      <!-- terminal body -->
      <div class="abs" style="left:427px;top:536px;width:555px;height:77px;background:#222336;overflow:hidden"><div class="abs" style="left:-427px;top:-536px;width:0;height:0">
        <div class="abs" style="left:472px;top:536.600px;width:36.600px;height:1px;background:#a2a3bd"></div><div class="abs" style="left:510.500px;top:537px;width:1.500px;height:1px;background:#a2a3bd"></div><div class="abs" style="left:514px;top:536.600px;width:8.300px;height:1px;background:#a2a3bd"></div>
        <div class="abs" style="left:457.900px;top:544.900px;width:4.300px;height:4.300px;border-radius:50%;background:#a2a3bd"></div>
        <div class="t" style='left:472.4px;top:541.00px;font-size:12px;color:#a2a3bd;font-family:"Liberation Mono",monospace;-webkit-text-stroke:.45px currentColor;transform:scaleX(0.9961);transform-origin:0 0'>remix (run remix.help() for more info)</div>
        <div class="t" style='left:432.5px;top:590.00px;font-size:15px;color:#a2a3bd;font-family:"Liberation Mono",monospace;-webkit-text-stroke:.45px currentColor'>&gt;</div>
        <div class="abs" style="left:973px;top:597px;width:8px;height:30px;background:#41445c;border-radius:4px"></div>
      </div></div>
    </div></div>
  </div>
</div>
</body>
</html>
